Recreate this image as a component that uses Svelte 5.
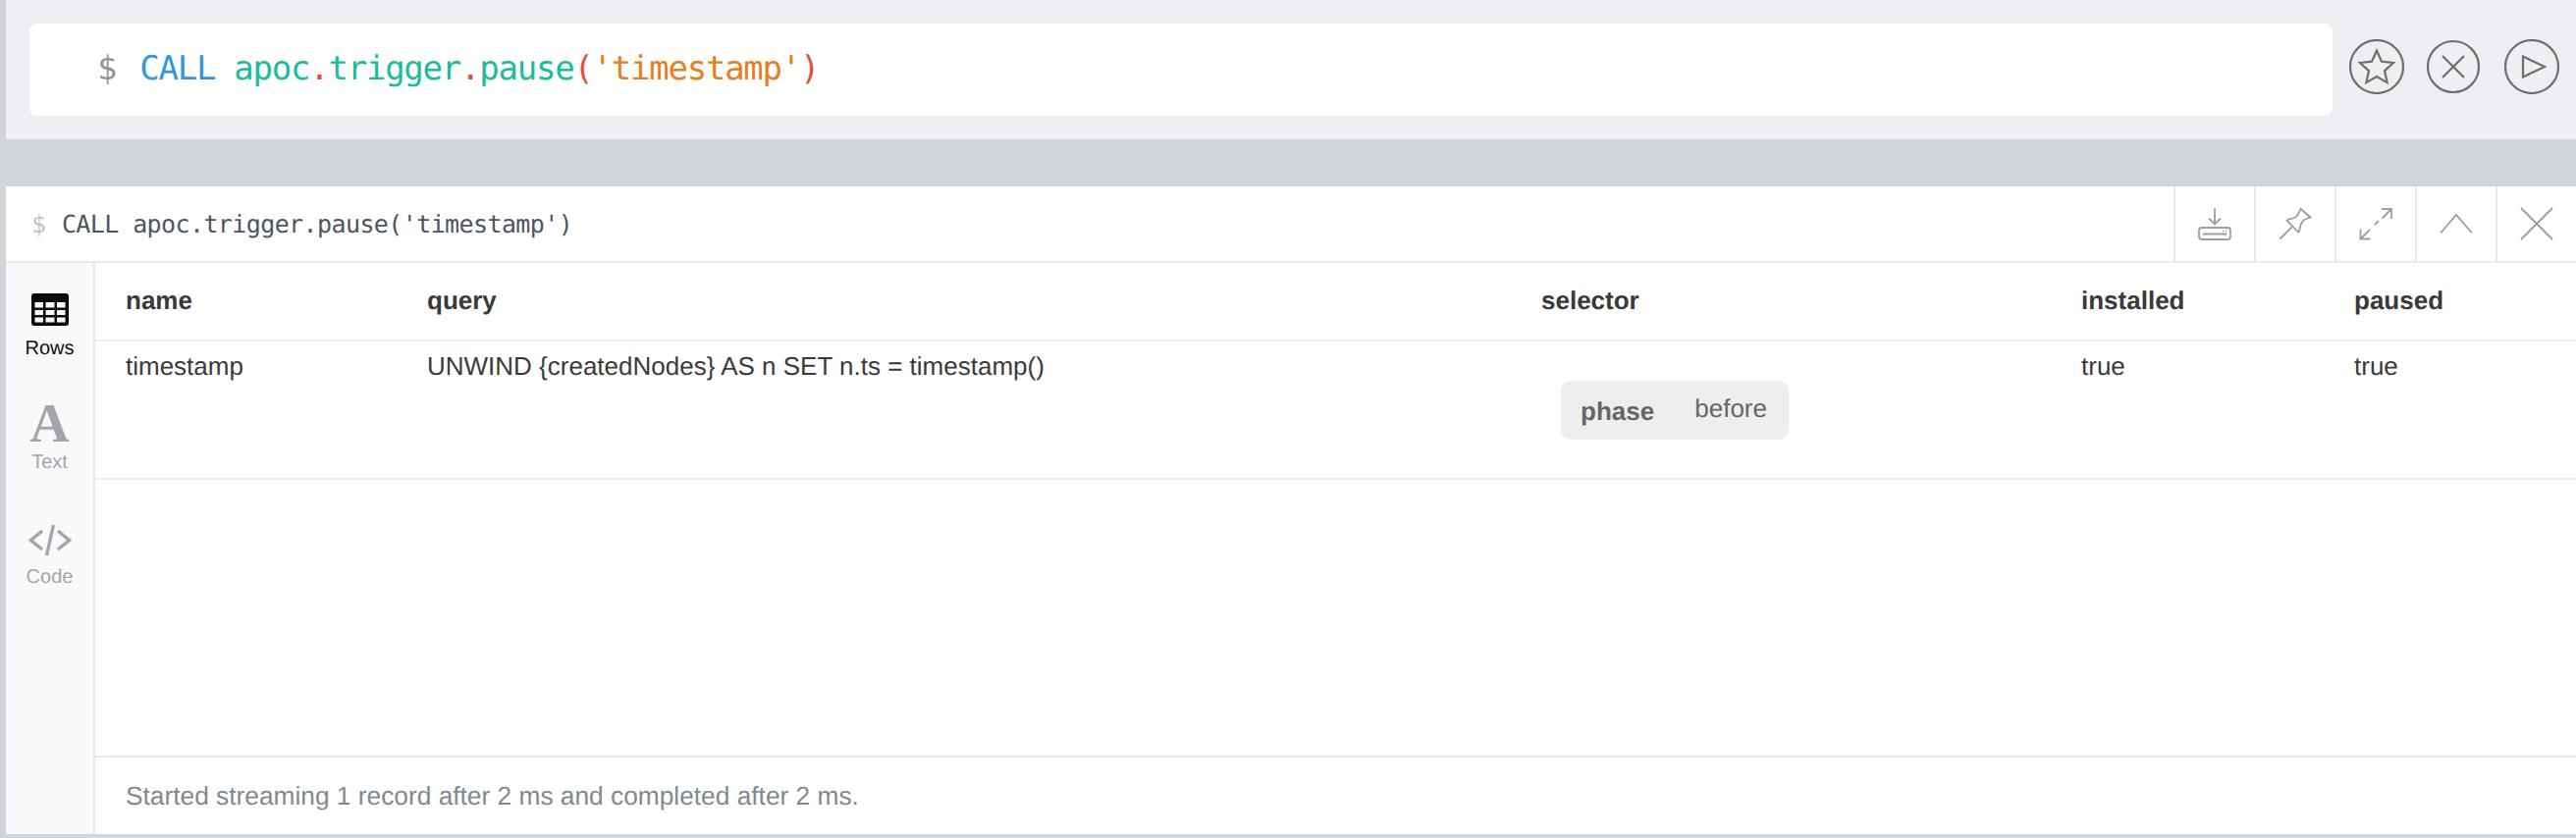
<script>
  const columns = ['name', 'query', 'selector', 'installed', 'paused'];
</script>

<div class="page">
  <section class="editor-bar">
    <div class="editor">
      <span class="prompt">$</span>
      <code><span class="kw">CALL</span> <span class="id">apoc</span><span class="dot">.</span><span class="id">trigger</span><span class="dot">.</span><span class="id">pause</span><span class="dot">(</span><span class="str">'timestamp'</span><span class="dot">)</span></code>
    </div>
    <div class="actions">
      <button class="round" aria-label="Favorite">
        <svg width="56" height="56" viewBox="0 0 56 56"><circle cx="28" cy="28" r="27" /><path d="M28 11.500l5 11.200 12 1.300-9 8.100 2.600 12L28 38l-10.600 6.100 2.600-12-9-8.100 12-1.300z" /></svg>
      </button>
      <button class="round" aria-label="Clear">
        <svg width="54" height="56" viewBox="0 0 54 56"><circle cx="27" cy="28" r="26" /><path d="M16 17l22 22M38 17L16 39" /></svg>
      </button>
      <button class="round" aria-label="Run">
        <svg width="56" height="56" viewBox="0 0 56 56"><circle cx="28" cy="28" r="27" /><path d="M19 17.500v21L41 28z" /></svg>
      </button>
    </div>
  </section>

  <section class="frame">
    <header class="frame-head">
      <div class="frame-cmd"><span class="frame-prompt">$</span> CALL apoc.trigger.pause('timestamp')</div>
      <div class="tools">
        <button class="tool" aria-label="Download">
          <svg width="34" height="34" viewBox="0 0 34 34"><path d="M17 1v16M11 11.500l6 6 6-6" /><rect x="1" y="21" width="32" height="12" rx="3" /><path d="M5 27.500h24M25 24.500h1M28 24.500h1" /></svg>
        </button>
        <button class="tool" aria-label="Pin">
          <svg width="34" height="34" viewBox="0 0 34 34"><path d="M22.500 1.800l10 8.700-4.500 1.500q-3 1-5 5-1.500 3-1.500 7L20 25.500 8.500 13.800 10 12.500q4-.5 7-2 3-2 4-5.500zM1.500 32.500l12-12" /></svg>
        </button>
        <button class="tool" aria-label="Expand">
          <svg width="34" height="34" viewBox="0 0 34 34"><path d="M23 2h10v10M33 2l-9.500 9.500M20 14l-4 4M11 23l-9.500 9.500M1.500 22.500v10h10" /></svg>
        </button>
        <button class="tool" aria-label="Collapse">
          <svg width="34" height="34" viewBox="0 0 34 34"><path d="M1 26.500L17 8l16 18.500" /></svg>
        </button>
        <button class="tool" aria-label="Close">
          <svg width="34" height="34" viewBox="0 0 34 34"><path d="M1 1l32 32M33 1L1 33" /></svg>
        </button>
      </div>
    </header>

    <div class="frame-body">
      <nav class="side">
        <div class="tab active">
          <svg class="tab-icon" width="38" height="33" viewBox="0 0 38 33"><path fill="#0a0a0a" fill-rule="evenodd" d="M3 0h32a3 3 0 0 1 3 3v27a3 3 0 0 1-3 3H3a3 3 0 0 1-3-3V3a3 3 0 0 1 3-3zM3.500 9v5.500h8.500V9zm11 0v5.500h9V9zM26 9v5.500h8.500V9zM3.500 17v5h8.500v-5zm11 0v5h9v-5zM26 17v5h8.500v-5zM3.500 24.500v5h8.500v-5zm11 0v5h9v-5zm11.500 0v5h8.500v-5z" /></svg>
          <span>Rows</span>
        </div>
        <div class="tab">
          <span class="glyph-a">A</span>
          <span>Text</span>
        </div>
        <div class="tab">
          <svg class="tab-icon" width="44" height="33" viewBox="0 0 44 33"><path fill="none" stroke="#a3a5ab" stroke-width="3.400" d="M14 7L2.500 16.500 14 26M30 7l11.500 9.500L30 26M25.500 1L18.500 32" /></svg>
          <span>Code</span>
        </div>
      </nav>

      <div class="results">
        <div class="table">
          <div class="row head">
            {#each columns as c}<div class="cell">{c}</div>{/each}
          </div>
          <div class="row data">
            <div class="cell">timestamp</div>
            <div class="cell">UNWIND &#123;createdNodes&#125; AS n SET n.ts = timestamp()</div>
            <div class="cell">
              <div class="pill"><b>phase</b><span>before</span></div>
            </div>
            <div class="cell">true</div>
            <div class="cell">true</div>
          </div>
        </div>
        <footer class="status">Started streaming 1 record after 2 ms and completed after 2 ms.</footer>
      </div>
    </div>
  </section>
</div>

<style>
  :global(body) { margin: 0; background: #d1d5da; }
  .page {
    width: 2624px;
    height: 854px;
    padding-left: 6px;
    box-sizing: border-box;
    overflow: hidden;
    font-family: "Liberation Sans", Arial, sans-serif;
    text-rendering: geometricPrecision;
  }
  button { background: none; border: 0; padding: 0; display: flex; align-items: center; justify-content: center; }

  .editor-bar {
    height: 142px;
    background: #eeeef3;
    display: flex;
    padding: 24px 0 24px 24px;
    box-sizing: border-box;
  }
  .editor {
    flex: none;
    width: 2346px;
    height: 94px;
    background: #fff;
    border-radius: 8px;
    display: flex;
    align-items: center;
    padding-left: 69px;
    padding-bottom: 2px;
    box-sizing: border-box;
    font: 34px/1 "DejaVu Sans Mono", monospace;
    letter-spacing: -1.250px;
  }
  .editor code { font: inherit; margin-left: 24px; white-space: pre; }
  .prompt { color: #929497; }
  .kw { color: #3498db; }
  .id { color: #1abc9c; }
  .dot { color: #e74c3c; }
  .str { color: #e67e22; }

  .actions { display: flex; gap: 22px; margin-left: 17px; margin-top: 16px; height: 56px; }
  .round { flex: none; width: 56px; height: 56px; }
  .round:nth-child(2) { width: 54px; margin-left: 1px; margin-right: 3px; }
  .round svg { fill: none; stroke: #6f6f6f; stroke-width: 2.200; }

  .frame {
    margin-top: 48px;
    height: 660px;
    background: #fff;
    display: flex;
    flex-direction: column;
  }
  .frame-head {
    height: 78px;
    border-bottom: 2px solid #e6e9ef;
    box-sizing: border-box;
    display: flex;
    align-items: stretch;
    justify-content: space-between;
  }
  .frame-cmd {
    padding-left: 26px;
    align-self: center;
    white-space: pre;
    font: 25px/1 "DejaVu Sans Mono", monospace;
    letter-spacing: -.600px;
    color: #4e5561;
  }
  .frame-prompt { color: #c0c2c7; margin-right: 2px; }
  .tools { display: flex; }
  .tool { width: 82px; border-left: 2px solid #e6e9ef; box-sizing: border-box; }
  .tool svg { fill: none; stroke: #9d9ea3; stroke-width: 1.800; display: block; }

  .frame-body { flex: 1; display: flex; min-height: 0; }
  .side {
    width: 89px;
    background: #f8f9fb;
    border-right: 2px solid #e6e9ef;
    flex: none;
  }
  .tab {
    height: 115px;
    box-sizing: border-box;
    border-bottom: 2px solid #f5f8f6;
    display: flex;
    flex-direction: column;
    align-items: center;
    font-size: 20px;
    line-height: 24px;
    color: #a3a5ab;
    padding-top: 31px;
  }
  .tab:nth-child(2), .tab:nth-child(3) { height: 116px; }
  .tab.active { color: #111; }
  .tab-icon { display: block; margin-bottom: 11px; }
  .tab:nth-child(3) .tab-icon { margin-bottom: 9px; }
  .tab:nth-child(2) { padding-top: 25px; }
  .tab:nth-child(3) { padding-top: 35px; }
  .glyph-a {
    font: bold 56px/48px "Liberation Serif", serif;
    color: #a3a5ab;
    margin-bottom: 3px;
  }

  .results { flex: 1; display: flex; flex-direction: column; min-width: 0; }
  .table { flex: 1; }
  .row {
    display: grid;
    grid-template-columns: 307px 1135px 550px 278px 1fr;
    padding-left: 31px;
    border-bottom: 2px solid #eeeeee;
    font-size: 26px;
    color: #3a3a3a;
  }
  .row.head { height: 80px; box-sizing: border-box; font-weight: 700; align-items: center; padding-bottom: 2px; }
  .row.data { height: 141px; box-sizing: border-box; padding-top: 9px; line-height: 32px; }
  .pill {
    display: flex;
    justify-content: space-between;
    width: 232px;
    height: 60px;
    box-sizing: border-box;
    margin: 31px 0 0 20px;
    padding: 0 22px 0 20px;
    background: #eeeeee;
    border-radius: 10px;
    color: #666;
    align-items: center;
  }
  .pill b { font-weight: 700; margin-top: 2px; }
  .pill span { margin-top: -4px; }
  .status {
    height: 80px;
    border-top: 2px solid #e6e9ef;
    box-sizing: border-box;
    padding-left: 31px;
    display: flex;
    align-items: center;
    font-size: 26.300px;
    color: #7f8a90;
  }
</style>
